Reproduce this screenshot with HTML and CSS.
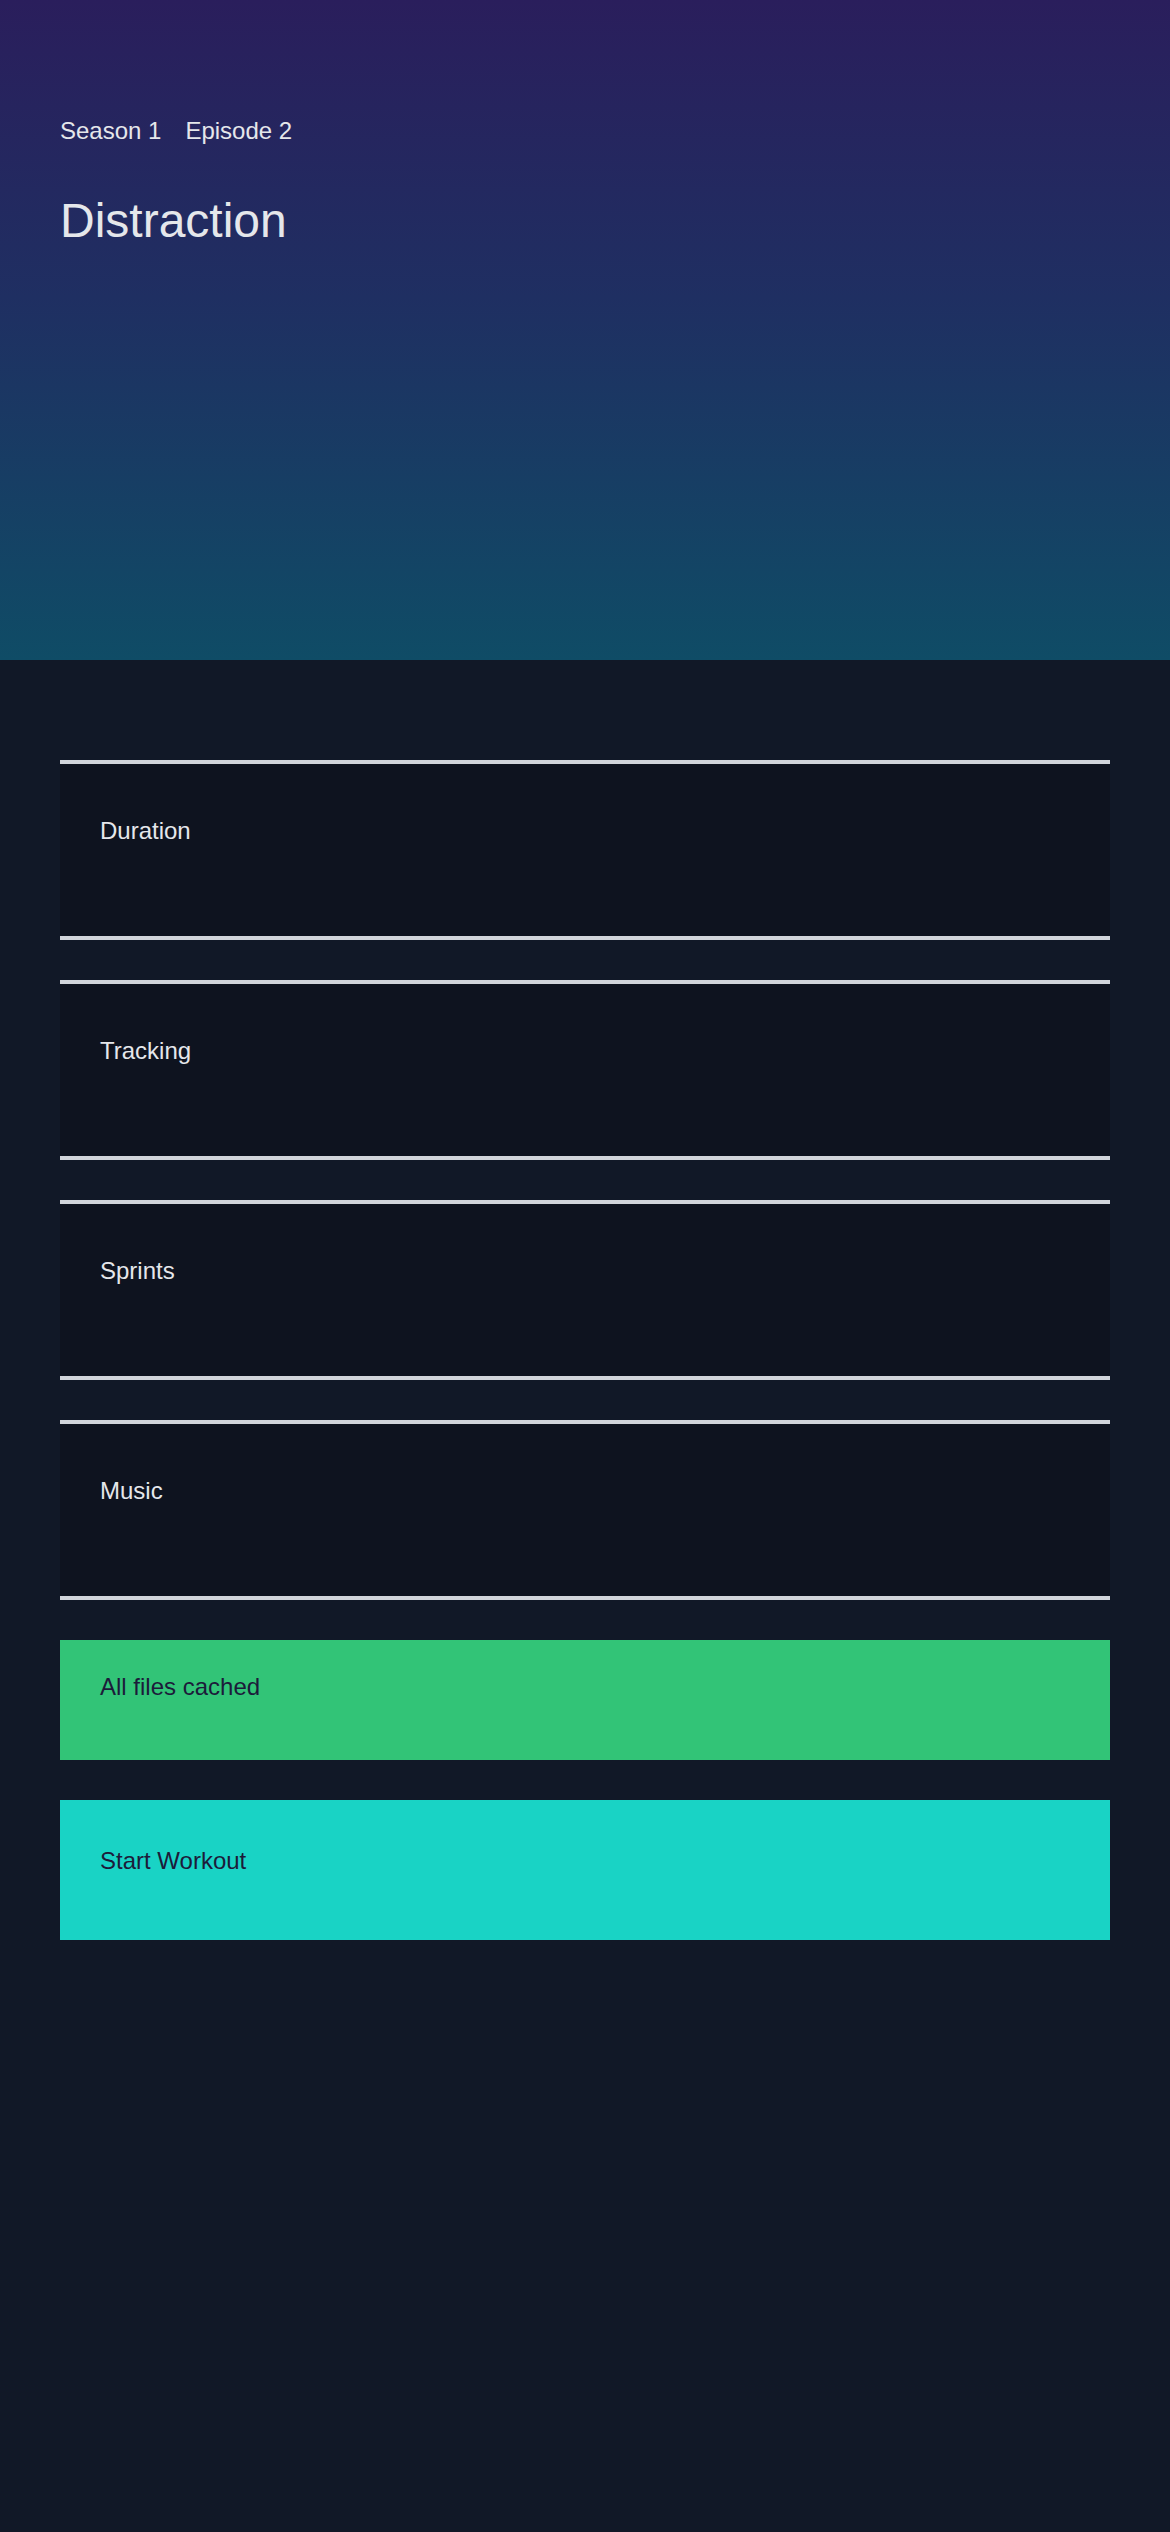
FILE: index.html
```html
<!DOCTYPE html>
<html lang="en">
<head>
<meta charset="utf-8">
<title>Distraction</title>
<link rel="stylesheet" href="styles.css">
</head>
<body>
<header class="hero">
  <div class="meta">
    <span>Season 1</span>
    <span>Episode 2</span>
  </div>
  <h1 class="title">Distraction</h1>
</header>
<main class="content">
  <section class="card"><span class="card-label">Duration</span></section>
  <section class="card"><span class="card-label">Tracking</span></section>
  <section class="card"><span class="card-label">Sprints</span></section>
  <section class="card"><span class="card-label">Music</span></section>
  <div class="status">All files cached</div>
  <button class="start">Start Workout</button>
</main>
</body>
</html>
```

FILE: styles.css
```css
* { box-sizing: border-box; }
html, body {
  margin: 0;
  padding: 0;
}
body {
  background: #111827;
  font-family: "Liberation Sans", Arial, sans-serif;
  color: #e5e7eb;
  min-height: 2532px;
}
.hero {
  height: 660px;
  padding: 117px 60px 0;
  background: linear-gradient(180deg, #2a1e5c 0%, #1f2f62 45%, #0f4c66 100%);
}
.meta {
  display: flex;
  gap: 24px;
  font-size: 24px;
  line-height: normal;
}
.title {
  margin: 48px 0 0;
  font-size: 48px;
  font-weight: 400;
  line-height: normal;
}
.content {
  padding: 100px 60px 0;
  display: flex;
  flex-direction: column;
  gap: 40px;
}
.card {
  height: 180px;
  background: #0e131f;
  border-top: 4px solid #d1d5db;
  border-bottom: 4px solid #d1d5db;
  padding: 53px 40px 0;
  font-size: 24px;
  line-height: normal;
}
.status {
  height: 120px;
  background: #32c477;
  color: #1c1b3a;
  padding: 33px 40px 0;
  font-size: 24px;
  line-height: normal;
}
.start {
  display: block;
  width: 100%;
  height: 140px;
  border: 0;
  margin: 0;
  text-align: left;
  background: #19d3c5;
  color: #1c1b3a;
  padding: 47px 40px 0;
  font-family: inherit;
  font-size: 24px;
  line-height: normal;
  vertical-align: top;
  display: flex;
  align-items: flex-start;
}
```
